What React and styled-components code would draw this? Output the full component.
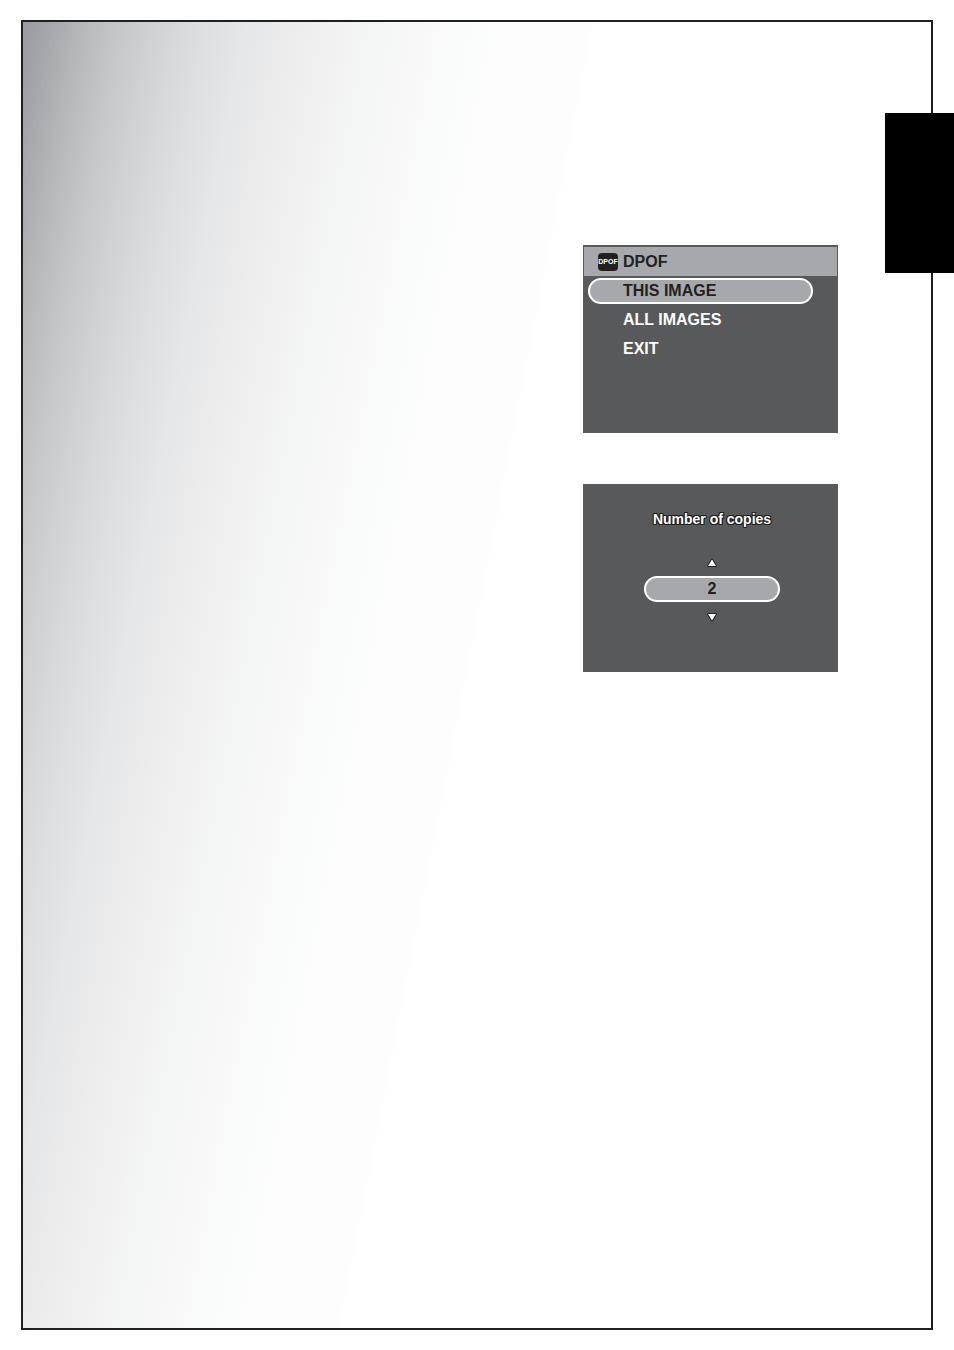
import React, { useState } from "react";
import styled, { createGlobalStyle, css } from "styled-components";

const ink = "#231f20";
const panel = "#58595b";
const silver = "#a7a8ac";

const GlobalStyle = createGlobalStyle`
  *, *::before, *::after { box-sizing: border-box; }
  body {
    margin: 0;
    background: #fff;
    font-family: "Liberation Sans", Arial, sans-serif;
  }
`;

const Page = styled.div`
  position: relative;
  display: flex;
  min-height: 100vh;
  padding: 20px 21px;
`;

const Frame = styled.main`
  flex: 1;
  display: flex;
  flex-direction: column;
  align-items: flex-end;
  gap: 51px;
  padding: 223px 93px 48px;
  border: 2px solid ${ink};
  background: linear-gradient(
    101deg,
    #999ba0 0px,
    #a5a7aa 27px,
    #b4b5b7 54px,
    #c4c5c7 90px,
    #d0d1d3 127px,
    #dddee0 176px,
    #e5e6e7 218px,
    #ededee 270px,
    #f1f1f1 308px,
    #f4f6f5 345px,
    #f8f8f8 395px,
    #fafcfb 430px,
    #fdfdfd 490px,
    #fdfdfd 555px,
    #fff 564px
  );
`;

const ChapterTab = styled.aside`
  position: absolute;
  top: 113px;
  right: 0;
  width: 69px;
  height: 160px;
  background: #000;
`;

const Screen = styled.section`
  display: flex;
  flex-direction: column;
  width: 255px;
  min-height: 188px;
  background: ${panel};
`;

const osdText = css`
  font-family: inherit;
  font-size: 16px;
  font-weight: 700;
  line-height: 22px;
`;

const TitleBar = styled.header`
  display: flex;
  align-items: center;
  gap: 5px;
  height: 29px;
  margin: 2px 1px 0;
  padding-left: 14px;
  background: ${silver};
`;

const Title = styled.h1`
  ${osdText}
  margin: 0;
  color: ${ink};
`;

const Badge = styled.span`
  display: flex;
  align-items: center;
  justify-content: center;
  width: 20px;
  height: 18px;
  border-radius: 4px;
  background: ${ink};
  color: #fff;
  font-size: 7px;
  font-weight: 700;
  line-height: 18px;
`;

const Menu = styled.nav`
  display: flex;
  flex-direction: column;
  gap: 3px;
  padding: 2px 25px 0 5px;
`;

const MenuItem = styled.button`
  ${osdText}
  height: 26px;
  padding: 0 0 0 33px;
  border: 2px solid ${(p) => (p.$active ? "#fff" : "transparent")};
  border-radius: 13px;
  background: ${(p) => (p.$active ? silver : "transparent")};
  color: ${(p) => (p.$active ? ink : "#fff")};
  text-align: left;
  cursor: pointer;
`;

const Copies = styled.div`
  display: flex;
  flex-direction: column;
  align-items: center;
  padding: 24px 0 0 3px;
`;

const CopiesLabel = styled.label`
  ${osdText}
  margin-bottom: 28px;
  font-size: 14px;
  color: #fff;
  text-shadow:
    1px 0 ${ink}, -1px 0 ${ink}, 0 1px ${ink}, 0 -1px ${ink},
    1px 1px ${ink}, -1px 1px ${ink}, 1px -1px ${ink}, -1px -1px ${ink};
`;

const CopiesInput = styled.input`
  ${osdText}
  width: 136px;
  height: 26px;
  margin: 8px 0 10px;
  padding: 0;
  border: 2px solid #fff;
  border-radius: 13px;
  background: ${silver};
  color: ${ink};
  text-align: center;
`;

const StepButton = styled.button`
  display: flex;
  padding: 0;
  border: 0;
  background: none;
  cursor: pointer;
`;

function Arrow({ down }) {
  return (
    <svg width="12" height="10" viewBox="0 0 12 10" aria-hidden="true">
      <path
        d={down ? "M2 2H10L6 8.5Z" : "M6 1.5L10 8H2Z"}
        fill="#fff"
        stroke={ink}
        strokeWidth="2"
        strokeLinejoin="round"
        paintOrder="stroke"
      />
    </svg>
  );
}

const options = ["THIS IMAGE", "ALL IMAGES", "EXIT"];

export default function App() {
  const [selected, setSelected] = useState(options[0]);
  const [copies, setCopies] = useState(2);

  return (
    <>
      <GlobalStyle />
      <Page>
        <Frame>
          <Screen>
            <TitleBar>
              <Badge>DPOF</Badge>
              <Title>DPOF</Title>
            </TitleBar>
            <Menu>
              {options.map((name) => (
                <MenuItem
                  key={name}
                  type="button"
                  $active={name === selected}
                  onClick={() => setSelected(name)}
                >
                  {name}
                </MenuItem>
              ))}
            </Menu>
          </Screen>
          <Screen>
            <Copies>
              <CopiesLabel htmlFor="copies">Number of copies</CopiesLabel>
              <StepButton type="button" aria-label="More" onClick={() => setCopies(copies + 1)}>
                <Arrow />
              </StepButton>
              <CopiesInput
                id="copies"
                inputMode="numeric"
                value={copies}
                onChange={(e) => setCopies(Number(e.target.value) || 0)}
              />
              <StepButton
                type="button"
                aria-label="Fewer"
                onClick={() => setCopies(Math.max(0, copies - 1))}
              >
                <Arrow down />
              </StepButton>
            </Copies>
          </Screen>
        </Frame>
        <ChapterTab />
      </Page>
    </>
  );
}
